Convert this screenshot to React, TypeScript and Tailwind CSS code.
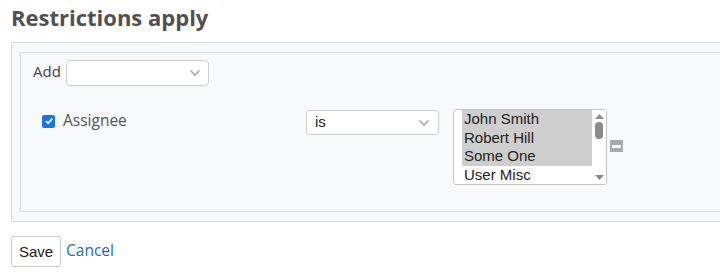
import React from 'react';

const Chevron = () => (
  <svg width="12" height="8" viewBox="0 0 12 8" className="shrink-0">
    <path d="M1.5 1.5 L6 6 L10.5 1.5" fill="none" stroke="#a9a9a9" strokeWidth="1.6" />
  </svg>
);

const users = [
  { name: 'John Smith', selected: true },
  { name: 'Robert Hill', selected: true },
  { name: 'Some One', selected: true },
  { name: 'User Misc', selected: false },
];

export default function App() {
  return (
    <div className="bg-white w-[720px] h-[274px] overflow-hidden font-['Open_Sans',sans-serif] text-[#444]">
      <h2 className="pl-[11px] pt-[2px] h-[42px] text-[22px] font-bold text-[#505050] leading-[30px]">
        Restrictions apply
      </h2>

      <div className="ml-[11px] w-[720px] border border-[#d5d9e1] rounded-[3px] bg-[#f8f9fb] py-[9px] pl-[8px]">
        <div className="border border-[#d5d9e1] border-r-0 h-[160px] pl-[12px] pt-[7px]">
          <div className="flex items-center h-[26px]">
            <span className="text-[15px] leading-[20px] mr-[5px] -mt-[4px]">Add</span>
            <div className="w-[143px] h-[26px] bg-white border border-[#cfcfcf] rounded-[4px] flex items-center justify-end pr-[7px]">
              <Chevron />
            </div>
          </div>

          <div className="flex items-start mt-[23px] pl-[9px]">
            <div className="w-[264px] flex items-center pt-[3px]">
              <span className="w-[13px] h-[13px] rounded-[2px] bg-[#1a73e8] flex items-center justify-center">
                <svg width="10" height="10" viewBox="0 0 10 10">
                  <path d="M2 5.2 L4.1 7.3 L8.2 2.6" fill="none" stroke="white" strokeWidth="1.8" />
                </svg>
              </span>
              <span className="ml-[8px] text-[15.5px] leading-[20px] text-[#555] -mt-[2px]">Assignee</span>
            </div>

            <div className="mt-[1px] w-[133px] h-[25px] bg-white border border-[#cfcfcf] rounded-[3px] flex items-center justify-between pl-[8px] pr-[8px] font-['Liberation_Sans',Arial,sans-serif] text-[15px] text-[#222]">
              <span>is</span>
              <Chevron />
            </div>

            <div className="ml-[14px] w-[154px] h-[76px] bg-white border border-[#c4c4c4] rounded-[3px] flex pl-[8px] font-['Liberation_Sans',Arial,sans-serif] text-[15px] text-[#222]">
              <div className="flex-1 flex flex-col">
                {users.map((u) => (
                  <div
                    key={u.name}
                    className={`h-[18.5px] leading-[18px] pl-[2px] ${u.selected ? 'bg-[#cecece]' : ''}`}
                  >
                    {u.name}
                  </div>
                ))}
              </div>
              <div className="w-[14px] flex flex-col items-center justify-between py-[4px] bg-white">
                <svg width="9" height="5" viewBox="0 0 9 5">
                  <path d="M0 5 L4.5 0 L9 5 Z" fill="#8a8a8a" />
                </svg>
                <div className="w-[8px] h-[17px] rounded-[4px] bg-[#8a8a8a] -mt-[33px]" />
                <svg width="9" height="5" viewBox="0 0 9 5">
                  <path d="M0 0 L4.5 5 L9 0 Z" fill="#8a8a8a" />
                </svg>
              </div>
            </div>

            <div className="ml-[3px] mt-[31px] w-[13px] h-[12px] bg-[#a9a9a9] flex items-center justify-center">
              <div className="w-[9px] h-[3px] bg-white" />
            </div>
          </div>
        </div>
      </div>

      <div className="flex items-start pl-[11px] mt-[14px]">
        <button className="h-[31px] w-[50px] border border-[#cccccc] rounded-[3px] bg-white font-['Liberation_Sans',Arial,sans-serif] text-[15px] text-[#222] pt-[2px]">
          Save
        </button>
        <a className="ml-[5px] text-[15.5px] leading-[28px] text-[#1f6fa6]">Cancel</a>
      </div>
    </div>
  );
}
